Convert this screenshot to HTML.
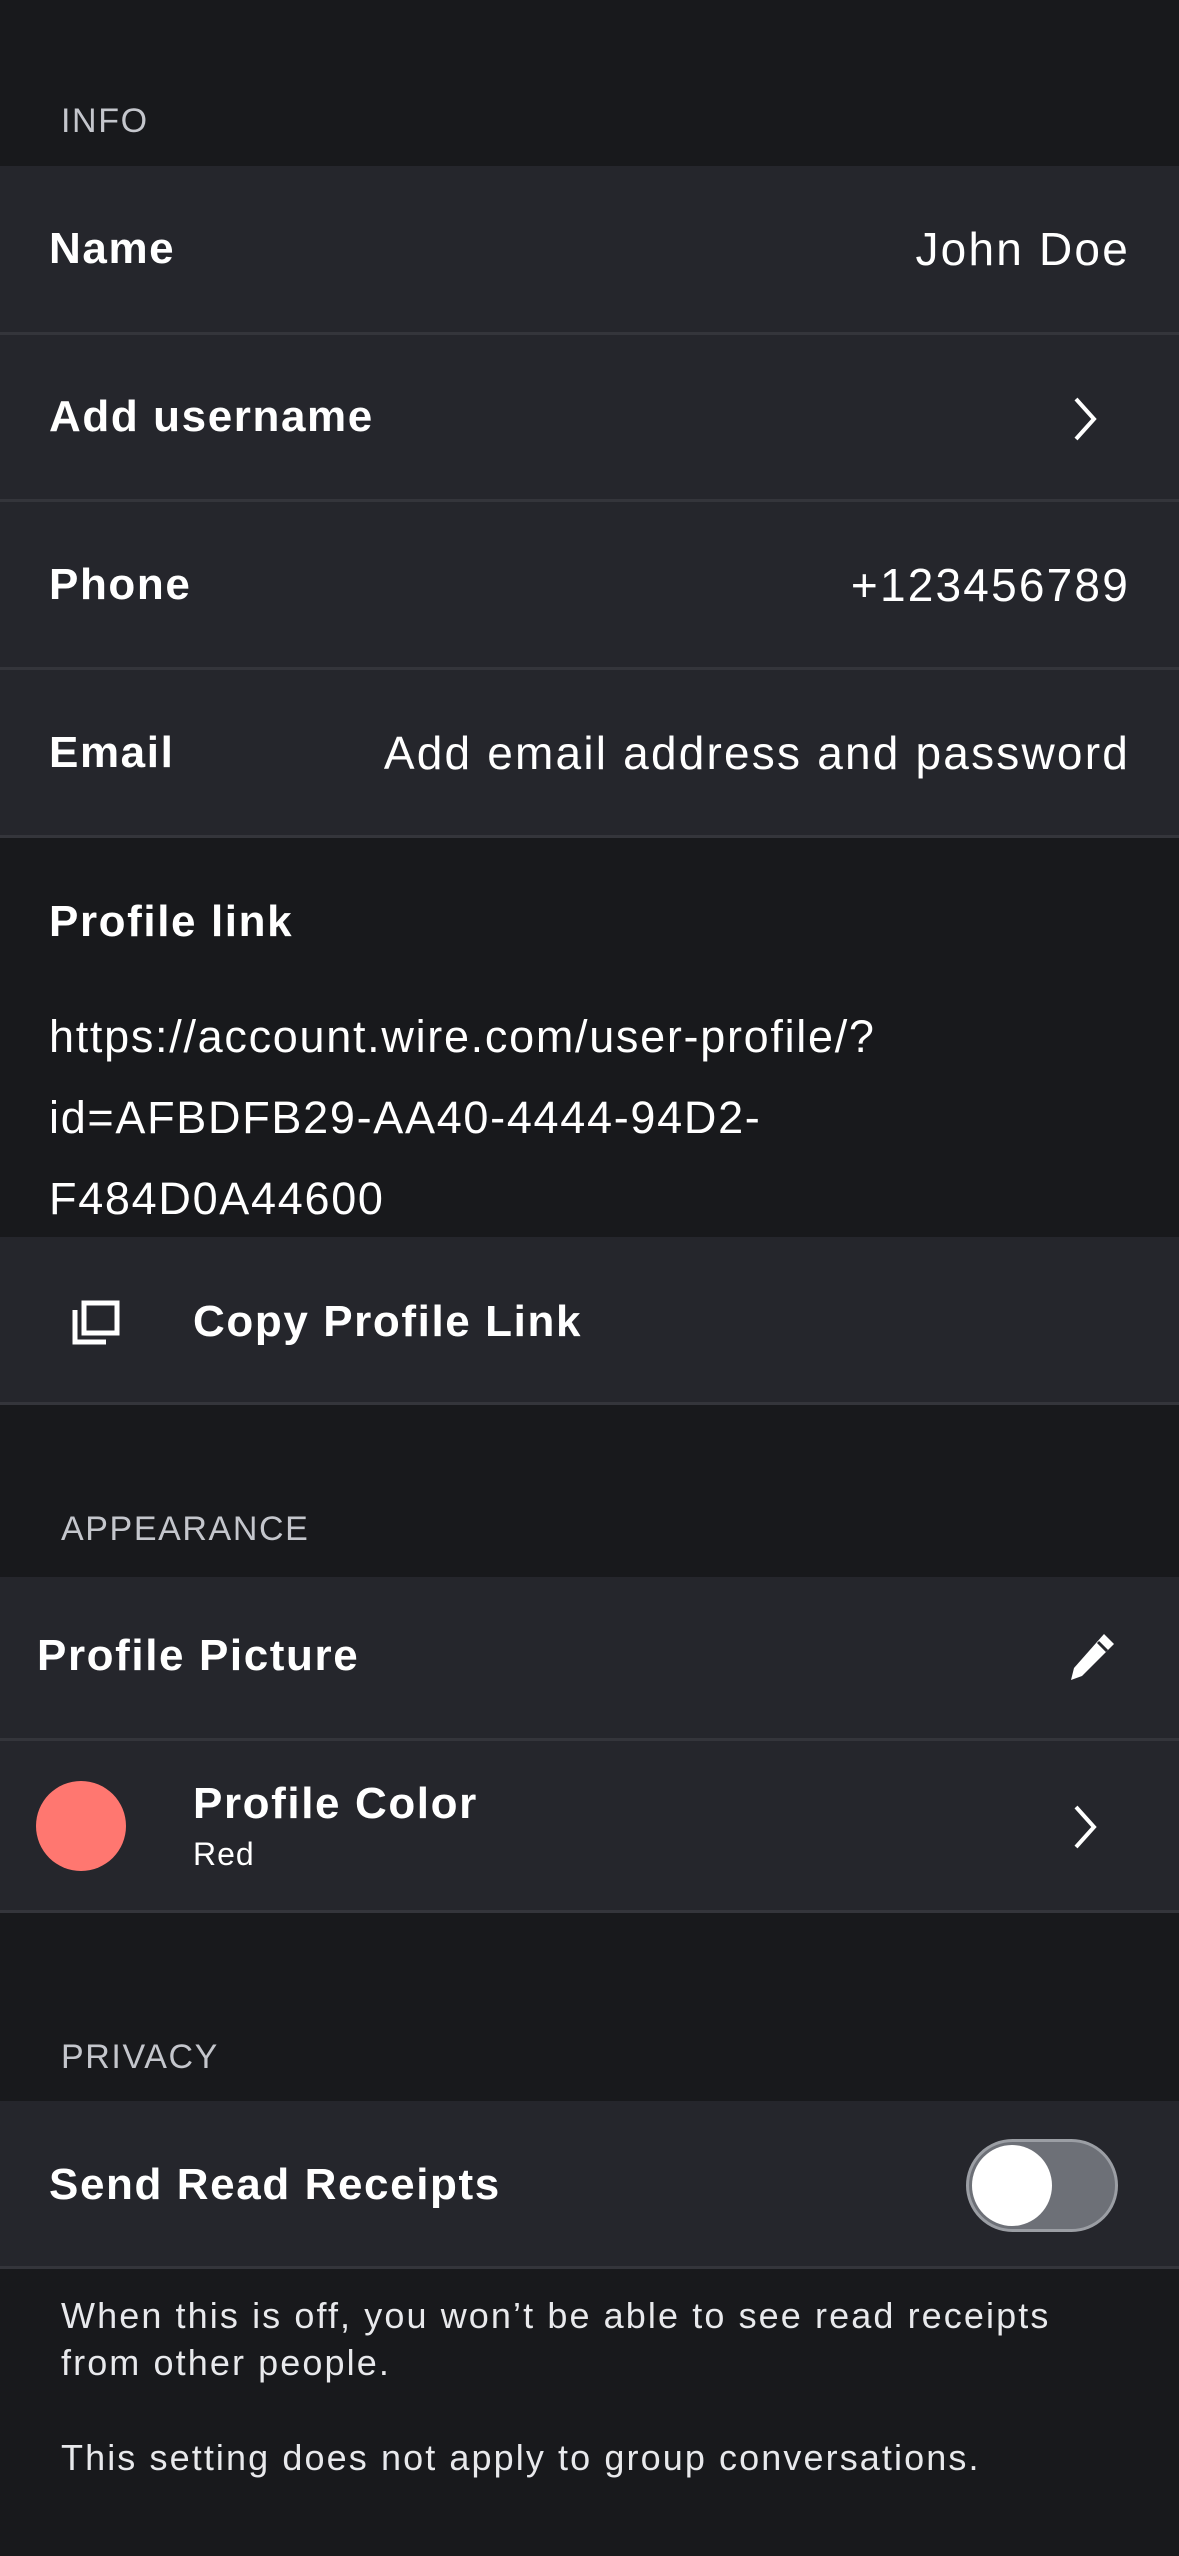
<!DOCTYPE html>
<html><head><meta charset="utf-8"><style>
*{margin:0;padding:0;box-sizing:border-box}
body{width:1179px;height:2556px;background:#18191c;font-family:"Liberation Sans",sans-serif;color:#fff;position:relative;overflow:hidden}
.a{position:absolute}
.cell{position:absolute;left:0;width:1179px;background:#25262c}
.sep{position:absolute;left:0;width:1179px;height:3px;background:#34353b}
.hdr{position:absolute;left:61px;font-size:34px;color:#c4c6cc;letter-spacing:1.6px}
.lbl{position:absolute;left:49px;font-size:44px;font-weight:bold;letter-spacing:1.6px}
.val{position:absolute;right:49px;font-size:46px;letter-spacing:2.2px}
.t{line-height:1}
</style></head><body>
<div class="hdr t" style="top:104px">INFO</div>
<div class="cell" style="top:166px;height:167px"></div>
<div class="sep" style="top:332px"></div>
<div class="cell" style="top:335px;height:165px"></div>
<div class="sep" style="top:499px"></div>
<div class="cell" style="top:502px;height:167px"></div>
<div class="sep" style="top:667px"></div>
<div class="cell" style="top:670px;height:167px"></div>
<div class="sep" style="top:835px"></div>

<div class="lbl t" style="top:227px">Name</div>
<div class="val t" style="top:226px">John Doe</div>
<div class="lbl t" style="top:395px">Add username</div>
<svg class="a" style="left:1070px;top:395px" width="30" height="48" viewBox="0 0 30 48"><path d="M6 4 L24 24 L6 44" fill="none" stroke="#fff" stroke-width="4"/></svg>
<div class="lbl t" style="top:563px">Phone</div>
<div class="val t" style="top:562px">+123456789</div>
<div class="lbl t" style="top:731px">Email</div>
<div class="val t" style="top:730px">Add email address and password</div>

<div class="lbl t" style="top:900px">Profile link</div>
<div class="a" style="left:49px;top:996px;font-size:45px;line-height:81px;letter-spacing:1.7px">https://account.wire.com/user-profile/?<br>id=AFBDFB29-AA40-4444-94D2-<br>F484D0A44600</div>

<div class="cell" style="top:1237px;height:166px"></div>
<div class="sep" style="top:1402px"></div>
<svg class="a" style="left:70px;top:1300px" width="52" height="46" viewBox="0 0 52 46"><rect x="14" y="3" width="33" height="30" fill="none" stroke="#fff" stroke-width="5"/><path d="M5 10 V42 H36" fill="none" stroke="#fff" stroke-width="5"/></svg>
<div class="lbl t" style="left:193px;top:1300px">Copy Profile Link</div>

<div class="hdr t" style="top:1512px">APPEARANCE</div>
<div class="cell" style="top:1577px;height:162px"></div>
<div class="sep" style="top:1738px"></div>
<div class="cell" style="top:1741px;height:170px"></div>
<div class="sep" style="top:1910px"></div>
<div class="lbl t" style="left:37px;top:1634px">Profile Picture</div>
<svg class="a" style="left:1068px;top:1630px" width="50" height="54" viewBox="0 0 50 54"><path d="M36 4 L46 14 L14 46 L3 50 L6 38 Z" fill="#fff"/><path d="M30 12 L39 21" stroke="#25262c" stroke-width="3"/></svg>
<div class="a" style="left:36px;top:1781px;width:90px;height:90px;border-radius:50%;background:#ff7770"></div>
<div class="lbl t" style="left:193px;top:1782px">Profile Color</div>
<div class="a t" style="left:193px;top:1838px;font-size:32px;letter-spacing:1px">Red</div>
<svg class="a" style="left:1070px;top:1803px" width="30" height="48" viewBox="0 0 30 48"><path d="M6 4 L24 24 L6 44" fill="none" stroke="#fff" stroke-width="4"/></svg>

<div class="hdr t" style="top:2040px">PRIVACY</div>
<div class="cell" style="top:2101px;height:166px"></div>
<div class="sep" style="top:2266px"></div>
<div class="lbl t" style="top:2163px">Send Read Receipts</div>
<div class="a" style="left:966px;top:2139px;width:152px;height:93px;border-radius:47px;background:#6d7077;border:3px solid #9b9ea4"></div>
<div class="a" style="left:972px;top:2145px;width:80px;height:81px;border-radius:50%;background:#fff"></div>

<div class="a" style="left:61px;top:2292px;font-size:36px;line-height:47px;color:#e8e9ec;letter-spacing:2.1px;white-space:nowrap">When this is off, you won’t be able to see read receipts<br>from other people.</div>
<div class="a" style="left:61px;top:2434px;font-size:36px;line-height:47px;color:#e8e9ec;letter-spacing:2.1px;white-space:nowrap">This setting does not apply to group conversations.</div>
</body></html>
